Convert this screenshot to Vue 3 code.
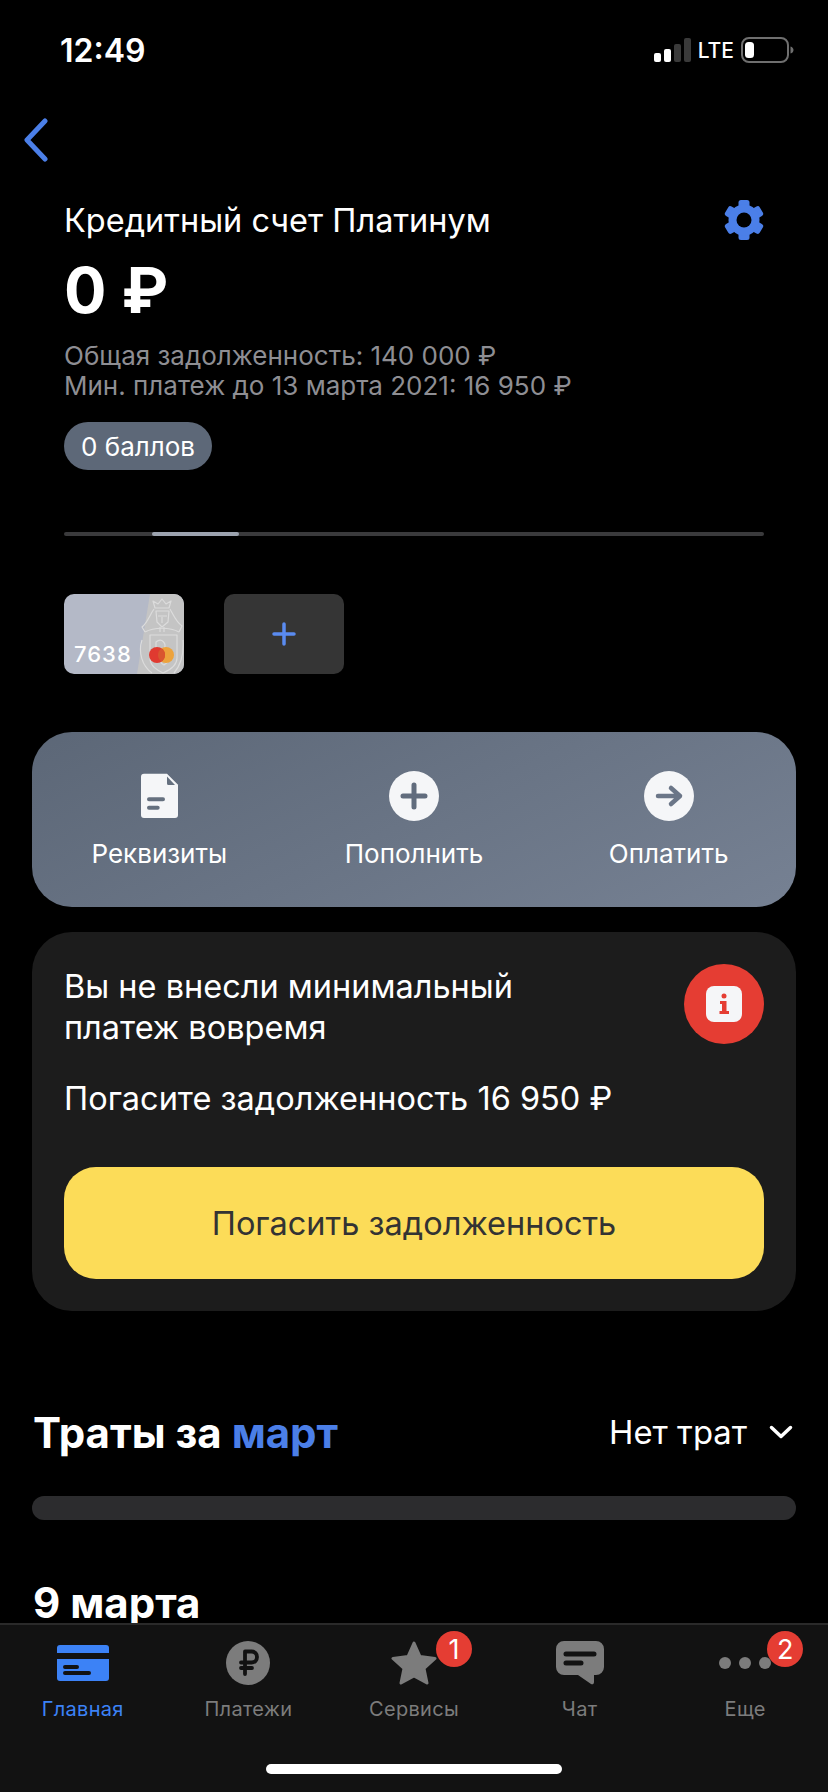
<script setup>
const actions = [
  { id: 'doc', label: 'Реквизиты' },
  { id: 'plus', label: 'Пополнить' },
  { id: 'arrow', label: 'Оплатить' }
]
const tabs = [
  { id: 'home', label: 'Главная', active: true },
  { id: 'pay', label: 'Платежи' },
  { id: 'star', label: 'Сервисы', badge: 1 },
  { id: 'chat', label: 'Чат' },
  { id: 'more', label: 'Еще', badge: 2 }
]
</script>

<template>
  <div class="phone">
    <div class="scroll">
      <div class="status">
        <span class="time">12:49</span>
        <div class="status-right">
          <svg width="38" height="24" viewBox="0 0 38 24">
            <rect x="0" y="15" width="7" height="9" rx="2" fill="#fff" />
            <rect x="10" y="11" width="7" height="13" rx="2" fill="#fff" />
            <rect x="20" y="6" width="7" height="18" rx="2" fill="#3a3a3a" />
            <rect x="30" y="0" width="7" height="24" rx="2" fill="#3a3a3a" />
          </svg>
          <span class="lte">LTE</span>
          <svg width="53" height="26" viewBox="0 0 53 26">
            <rect x="1" y="1" width="46" height="24" rx="7" fill="none" stroke="#6f6f6f" stroke-width="2" />
            <rect x="4" y="5" width="9" height="16" rx="3.500" fill="#fff" />
            <path d="M49.500 9.500 C51.500 10 52.500 11.500 52.500 13 C52.500 14.500 51.500 16 49.500 16.500 Z" fill="#6f6f6f" />
          </svg>
        </div>
      </div>

      <div class="nav">
        <svg width="26" height="44" viewBox="0 0 26 44">
          <path d="M23 3 L5 22 L23 41" fill="none" stroke="#4b7fe8" stroke-width="5" stroke-linecap="round" stroke-linejoin="round" />
        </svg>
      </div>

      <div class="head">
        <div class="title-row">
          <span class="title">Кредитный счет Платинум</span>
          <svg class="gear" width="42" height="42" viewBox="0 0 42 42">
            <g fill="#4b7fe8">
              <rect x="15.500" y="1" width="11" height="40" rx="2.500" />
              <rect x="15.500" y="1" width="11" height="40" rx="2.500" transform="rotate(60 21 21)" />
              <rect x="15.500" y="1" width="11" height="40" rx="2.500" transform="rotate(120 21 21)" />
              <circle cx="21" cy="21" r="15.500" />
            </g>
            <circle cx="21" cy="21" r="7.500" fill="#000" />
          </svg>
        </div>
        <div class="amount">0 ₽</div>
        <div class="sub">Общая задолженность: 140 000 ₽</div>
        <div class="sub">Мин. платеж до 13 марта 2021: 16 950 ₽</div>
        <div class="pill">0 баллов</div>
        <div class="progress"><div class="thumb"></div></div>
        <div class="cards">
          <div class="card">
            <svg class="card-art" width="120" height="80" viewBox="0 0 120 80">
              <path d="M86 0 H120 V80 H73 Z" fill="#c4c4c4" />
              <g fill="none" stroke="#dcdcdc" stroke-width="1.200" stroke-linejoin="round">
                <path d="M91 14 L89 7 L94 10 L98 5 L102 10 L107 7 L105 14 Z" />
                <path d="M92 17 H105 L104 28 L98 33 L93 28 Z" />
                <path d="M94 22 H103 M98 23 V29 M96 33 V38 M100 33 V38" />
                <path d="M90 15 C85 22 84 28 78 33 L81 38 M106 15 C110 22 112 28 118 32 L115 38" />
                <path d="M81 38 C90 33 106 33 115 38" />
                <path d="M86 41 H113 V64 C113 72 106 76 99 79 C93 76 86 72 86 64 Z" />
                <path d="M92 48 C98 43 103 50 100 55 C107 56 108 66 100 71 C94 68 91 58 92 48 Z" />
                <path d="M78 46 C74 58 78 72 88 79 M119 46 C120 60 116 72 110 79" />
              </g>
            </svg>
            <span class="card-num">7638</span>
            <svg class="mc" width="25" height="16" viewBox="0 0 25 16">
              <circle cx="17" cy="8" r="8" fill="#eda33c" />
              <circle cx="8" cy="8" r="8" fill="#e03a30" />
              <path d="M12.500 1.400 A8 8 0 0 1 12.500 14.600 A8 8 0 0 1 12.500 1.400 Z" fill="#d9562f" />
            </svg>
          </div>
          <div class="card-add">
            <svg width="24" height="24" viewBox="0 0 24 24">
              <path d="M12 2 V22 M2 12 H22" stroke="#5a8bf0" stroke-width="3.500" stroke-linecap="round" />
            </svg>
          </div>
        </div>
      </div>

      <div class="actions">
        <div v-for="a in actions" :key="a.id" class="action">
          <svg v-if="a.id === 'doc'" class="action-icon" width="50" height="50" viewBox="0 0 50 50">
            <path d="M10 2.700 H33 L44 13.700 V44 A3 3 0 0 1 41 47 H10 A3 3 0 0 1 7 44 V5.700 A3 3 0 0 1 10 2.700 Z" fill="#f5f6f8" />
            <path d="M33 5.500 L41 14 H34.500 A1.500 1.500 0 0 1 33 12.500 Z" fill="#65707f" />
            <path d="M15 28.300 H29 M15 36.700 H23.700" stroke="#65707f" stroke-width="4" stroke-linecap="round" />
          </svg>
          <svg v-else-if="a.id === 'plus'" class="action-icon" width="50" height="50" viewBox="0 0 50 50">
            <circle cx="25" cy="25" r="25" fill="#f5f6f8" />
            <path d="M25 14 V36 M14 25 H36" stroke="#616c7d" stroke-width="5" stroke-linecap="round" />
          </svg>
          <svg v-else class="action-icon" width="50" height="50" viewBox="0 0 50 50">
            <circle cx="25" cy="25" r="25" fill="#f5f6f8" />
            <path d="M14 25 H36 M27 17 L36 25 L27 33" fill="none" stroke="#6b7688" stroke-width="4.500" stroke-linecap="round" stroke-linejoin="round" />
          </svg>
          <span class="action-label">{{ a.label }}</span>
        </div>
      </div>

      <div class="alert">
        <div class="alert-top">
          <div class="alert-text">Вы не внесли минимальный<br />платеж вовремя</div>
          <div class="alert-icon">
            <svg width="36" height="36" viewBox="0 0 36 36">
              <rect width="36" height="36" rx="8" fill="#f5f6f8" />
              <circle cx="18" cy="10" r="2.500" fill="#e53d33" />
              <path d="M14 15 H20.500 V25 H23 V28 H13.500 V25 H16 V18 H14 Z" fill="#e53d33" />
            </svg>
          </div>
        </div>
        <div class="alert-debt">Погасите задолженность 16 950 ₽</div>
        <div class="alert-btn">Погасить задолженность</div>
      </div>

      <div class="spend-head">
        <div class="spend-title">Траты за <span class="blue">март</span></div>
        <div class="spend-side">
          <span>Нет трат</span>
          <svg width="24" height="14" viewBox="0 0 24 14">
            <path d="M2.500 2.500 L12 11.500 L21.500 2.500" fill="none" stroke="#fff" stroke-width="3.500" stroke-linecap="round" stroke-linejoin="round" />
          </svg>
        </div>
      </div>
      <div class="spend-bar"></div>
      <div class="date">9 марта</div>
    </div>

    <div class="tabbar">
      <div v-for="t in tabs" :key="t.id" class="tab" :class="{ active: t.active }">
        <div class="tab-icon">
          <svg v-if="t.id === 'home'" width="52" height="36" viewBox="0 0 52 36">
            <path d="M3 0 H49 A3 3 0 0 1 52 3 V8 H0 V3 A3 3 0 0 1 3 0 Z" fill="#3c82f6" />
            <path d="M0 14 H52 V33 A3 3 0 0 1 49 36 H3 A3 3 0 0 1 0 33 Z" fill="#3c82f6" />
            <path d="M8 22 H20 M8 28 H32" stroke="#121212" stroke-width="4" stroke-linecap="round" />
          </svg>
          <svg v-else-if="t.id === 'pay'" width="44" height="44" viewBox="0 0 44 44">
            <circle cx="22" cy="22" r="22" fill="#7c7c7c" />
            <path d="M19 33 V10.500 H25.500 C29 10.500 31 13 31 16 C31 19 29 21.500 25.500 21.500 H15 M15 27 H26" fill="none" stroke="#121212" stroke-width="3.800" stroke-linecap="round" stroke-linejoin="round" />
          </svg>
          <svg v-else-if="t.id === 'star'" width="46" height="44" viewBox="0 0 46 44">
            <path d="M23 2 L29 15.500 L44 17.500 L33 27.500 L36 42 L23 35 L10 42 L13 27.500 L2 17.500 L17 15.500 Z" fill="#7c7c7c" stroke="#7c7c7c" stroke-width="3" stroke-linejoin="round" />
          </svg>
          <svg v-else-if="t.id === 'chat'" width="48" height="44" viewBox="0 0 48 44">
            <path d="M8 0 H40 A8 8 0 0 1 48 8 V26 A8 8 0 0 1 40 34 H38 V41 C38 43 36.500 43.800 35 43 L22 34 H8 A8 8 0 0 1 0 26 V8 A8 8 0 0 1 8 0 Z" fill="#7c7c7c" />
            <path d="M10 13 H38 M10 22 H25" stroke="#121212" stroke-width="5" stroke-linecap="round" />
          </svg>
          <svg v-else width="52" height="12" viewBox="0 0 52 12">
            <circle cx="6" cy="6" r="6" fill="#7c7c7c" />
            <circle cx="26" cy="6" r="6" fill="#7c7c7c" />
            <circle cx="46" cy="6" r="6" fill="#7c7c7c" />
          </svg>
          <span v-if="t.badge" class="badge">{{ t.badge }}</span>
        </div>
        <span class="tab-label">{{ t.label }}</span>
      </div>
      <div class="home-bar"></div>
    </div>
  </div>
</template>

<style scoped>
.phone {
  width: 828px;
  height: 1792px;
  background: #000;
  color: #fff;
  font-family: Inter, "Noto Sans", sans-serif;
  display: flex;
  flex-direction: column;
  overflow: hidden;
}

.scroll {
  flex: 1;
  min-height: 0;
  overflow: hidden;
}

.status {
  height: 100px;
  display: flex;
  justify-content: space-between;
  align-items: center;
  padding: 0 34px 0 60px;
}

.time {
  font-size: 32px;
  font-weight: 600;
}

.status-right {
  display: flex;
  align-items: center;
  gap: 6px;
}

.lte {
  font-size: 21px;
  font-weight: 500;
  margin-right: 1px;
}

.nav {
  height: 80px;
  display: flex;
  align-items: center;
  padding-left: 22px;
}

.head {
  padding: 0 64px;
}

.title-row {
  height: 80px;
  display: flex;
  justify-content: space-between;
  align-items: center;
}

.title {
  font-size: 32.500px;
}

.gear {
  margin-right: -1px;
}

.amount {
  font-size: 63px;
  font-weight: 700;
  line-height: 60px;
  margin-bottom: 21px;
}

.sub {
  color: #8e8e93;
  font-size: 26px;
  line-height: 30px;
}

.pill {
  width: 148px;
  height: 48px;
  margin-top: 21px;
  border-radius: 24px;
  background: #5d6878;
  font-size: 26px;
  display: flex;
  align-items: center;
  justify-content: center;
}

.progress {
  height: 4px;
  margin-top: 62px;
  background: #3a3a3c;
  border-radius: 2px;
  padding-left: 88px;
}

.thumb {
  width: 87px;
  height: 4px;
  background: #9ca3af;
  border-radius: 2px;
}

.cards {
  display: flex;
  gap: 40px;
  margin-top: 58px;
}

.card {
  width: 120px;
  height: 80px;
  border-radius: 10px;
  background: #b4b9c7;
  position: relative;
  overflow: hidden;
}

.card-art {
  display: block;
}

.card-num {
  position: absolute;
  left: 10px;
  top: 47px;
  font-size: 22px;
  font-weight: 500;
  letter-spacing: 1px;
}

.mc {
  position: absolute;
  left: 85px;
  top: 53px;
}

.card-add {
  width: 120px;
  height: 80px;
  border-radius: 10px;
  background: #353535;
  display: flex;
  align-items: center;
  justify-content: center;
}

.actions {
  margin: 58px 32px 0;
  height: 175px;
  border-radius: 40px;
  background: linear-gradient(155deg, #5c6777, #768193);
  display: grid;
  grid-template-columns: repeat(3, 1fr);
}

.action {
  display: flex;
  flex-direction: column;
  align-items: center;
  padding-top: 39px;
}

.action-label {
  font-size: 26px;
  line-height: 32px;
  margin-top: 17px;
}

.alert {
  box-sizing: border-box;
  margin: 25px 32px 0;
  height: 379px;
  border-radius: 40px;
  background: #1c1c1c;
  padding: 32px;
}

.alert-top {
  display: flex;
  justify-content: space-between;
}

.alert-text {
  font-size: 32.500px;
  line-height: 41px;
  padding-top: 2px;
}

.alert-icon {
  width: 80px;
  height: 80px;
  border-radius: 50%;
  background: #e53d33;
  display: flex;
  align-items: center;
  justify-content: center;
}

.alert-debt {
  font-size: 32.500px;
  line-height: 41px;
  margin-top: 30px;
}

.alert-btn {
  height: 112px;
  margin-top: 48px;
  border-radius: 32px;
  background: #fcdc58;
  color: #333;
  font-size: 32.500px;
  display: flex;
  align-items: center;
  justify-content: center;
}

.spend-head {
  margin-top: 91px;
  padding: 0 32px 0 33px;
  display: flex;
  justify-content: space-between;
  align-items: center;
  height: 60px;
}

.spend-title {
  font-size: 42px;
  font-weight: 700;
}

.blue {
  color: #4b7fe8;
}

.spend-side {
  display: flex;
  align-items: center;
  gap: 22px;
  font-size: 32.800px;
  padding-right: 3px;
}

.spend-bar {
  margin: 34px 32px 0;
  height: 24px;
  border-radius: 12px;
  background: #2c2c2e;
}

.date {
  margin-top: 58px;
  padding-left: 33px;
  font-size: 42px;
  font-weight: 700;
  line-height: 50px;
}

.tabbar {
  height: 167px;
  background: #121212;
  border-top: 2px solid #2a2a2a;
  display: flex;
  position: relative;
}

.tab {
  flex: 1;
  display: flex;
  flex-direction: column;
  align-items: center;
  color: #7c7c7c;
  padding-top: 15px;
}

.tab.active {
  color: #3c82f6;
}

.tab-icon {
  height: 46px;
  position: relative;
  display: flex;
  align-items: center;
  justify-content: center;
}

.badge {
  position: absolute;
  left: 50%;
  top: -9px;
  margin-left: 22px;
  width: 36px;
  height: 36px;
  border-radius: 50%;
  background: #e53d33;
  color: #fff;
  font-size: 27px;
  display: flex;
  align-items: center;
  justify-content: center;
}

.tab-label {
  font-size: 20px;
  line-height: 26px;
  margin-top: 10px;
  letter-spacing: 0.300px;
}

.home-bar {
  position: absolute;
  left: 266px;
  top: 139px;
  width: 296px;
  height: 10px;
  border-radius: 5px;
  background: #fff;
}
</style>
